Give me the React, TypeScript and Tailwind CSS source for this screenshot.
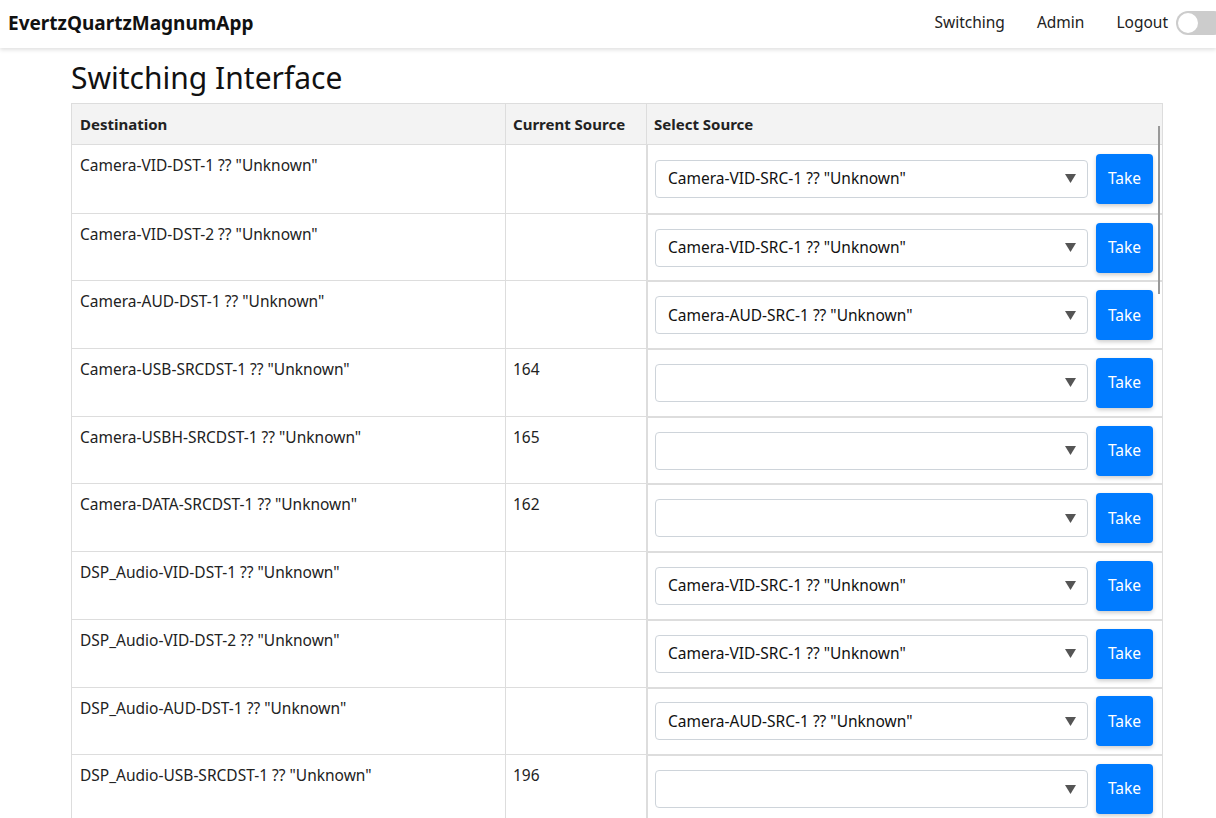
import React from "react";

type Row = { dest: string; current: string; source: string };

const rows: Row[] = [
  { dest: 'Camera-VID-DST-1 ?? "Unknown"', current: "", source: 'Camera-VID-SRC-1 ?? "Unknown"' },
  { dest: 'Camera-VID-DST-2 ?? "Unknown"', current: "", source: 'Camera-VID-SRC-1 ?? "Unknown"' },
  { dest: 'Camera-AUD-DST-1 ?? "Unknown"', current: "", source: 'Camera-AUD-SRC-1 ?? "Unknown"' },
  { dest: 'Camera-USB-SRCDST-1 ?? "Unknown"', current: "164", source: "" },
  { dest: 'Camera-USBH-SRCDST-1 ?? "Unknown"', current: "165", source: "" },
  { dest: 'Camera-DATA-SRCDST-1 ?? "Unknown"', current: "162", source: "" },
  { dest: 'DSP_Audio-VID-DST-1 ?? "Unknown"', current: "", source: 'Camera-VID-SRC-1 ?? "Unknown"' },
  { dest: 'DSP_Audio-VID-DST-2 ?? "Unknown"', current: "", source: 'Camera-VID-SRC-1 ?? "Unknown"' },
  { dest: 'DSP_Audio-AUD-DST-1 ?? "Unknown"', current: "", source: 'Camera-AUD-SRC-1 ?? "Unknown"' },
  { dest: 'DSP_Audio-USB-SRCDST-1 ?? "Unknown"', current: "196", source: "" },
];

const SourceSelect = ({ value }: { value: string }) => (
  <div className="flex-1 h-[38px] flex items-center justify-between pl-[12px] pr-[11px] border border-[#ced4da] rounded-[4px] bg-white text-[15.5px] text-[#111]">
    <span>{value}</span>
    <svg width="11" height="9" viewBox="0 0 11 9">
      <path d="M0 0 L11 0 L5.5 9 Z" fill="#555" />
    </svg>
  </div>
);

const App = () => {
  return (
    <div className="min-h-screen bg-white text-[#212529] font-['Noto_Sans','Open_Sans',sans-serif] overflow-hidden">
      {/* navbar */}
      <nav className="h-[48px] flex items-center justify-between pl-[8px] pb-[2px] bg-white shadow-[0_2px_4px_rgba(0,0,0,0.12)] relative z-10">
        <span className="text-[19px] font-bold text-[#111]">EvertzQuartzMagnumApp</span>
        <div className="flex items-center text-[15.5px] text-[#222]">
          <a className="mr-[32px]">Switching</a>
          <a className="mr-[32px]">Admin</a>
          <a className="mr-[8px]">Logout</a>
          <div className="w-[40px] h-[24px] overflow-hidden">
            <div className="w-[50px] h-[24px] rounded-full bg-[#ccc] flex items-center pl-[2px]">
              <div className="w-[20px] h-[20px] rounded-full bg-white" />
            </div>
          </div>
        </div>
      </nav>

      <div className="ml-[71px] w-[1092px] relative">
        <h1 className="text-[30px] leading-[38px] font-normal text-[#111] mt-[11px] mb-[6px]">Switching Interface</h1>

        <div className="border-l border-r border-[#ddd] text-[15.5px]">
          {/* header */}
          <div className="grid grid-cols-[433px_141px_1fr] bg-[#f3f3f3] border-t border-b border-[#ddd] h-[42px] text-[15px] font-bold text-[#222]">
            <div className="px-[8px] flex items-center">Destination</div>
            <div className="px-[7px] flex items-center border-l border-[#ddd]">Current Source</div>
            <div className="px-[7px] flex items-center border-l border-[#ddd]">Select Source</div>
          </div>

          {rows.map((r, i) => (
            <div
              key={i}
              className={`grid grid-cols-[433px_141px_1fr] h-[67.7px] ${i > 0 ? "border-t border-[#ddd]" : ""}`}
            >
              <div className="px-[8px] pt-[9px] text-[#222]">{r.dest}</div>
              <div className="px-[7px] pt-[9px] text-[#222] border-l border-[#ddd]">{r.current}</div>
              <div className={`flex items-center gap-[8px] pl-[7px] pr-[9px] border-l-2 border-[#ddd] ${i > 0 ? "border-t" : ""}`}>
                <SourceSelect value={r.source} />
                <button className="w-[57px] h-[50px] rounded-[4px] bg-[#007bff] text-white text-[15.5px] shadow-[0_2px_4px_rgba(0,0,0,0.2)]">
                  Take
                </button>
              </div>
            </div>
          ))}
        </div>

        {/* scroll indicator */}
        <div className="absolute left-[1087px] top-[67px] w-[2px] h-[168px] bg-[#999]" />
      </div>
    </div>
  );
};

export default App;
